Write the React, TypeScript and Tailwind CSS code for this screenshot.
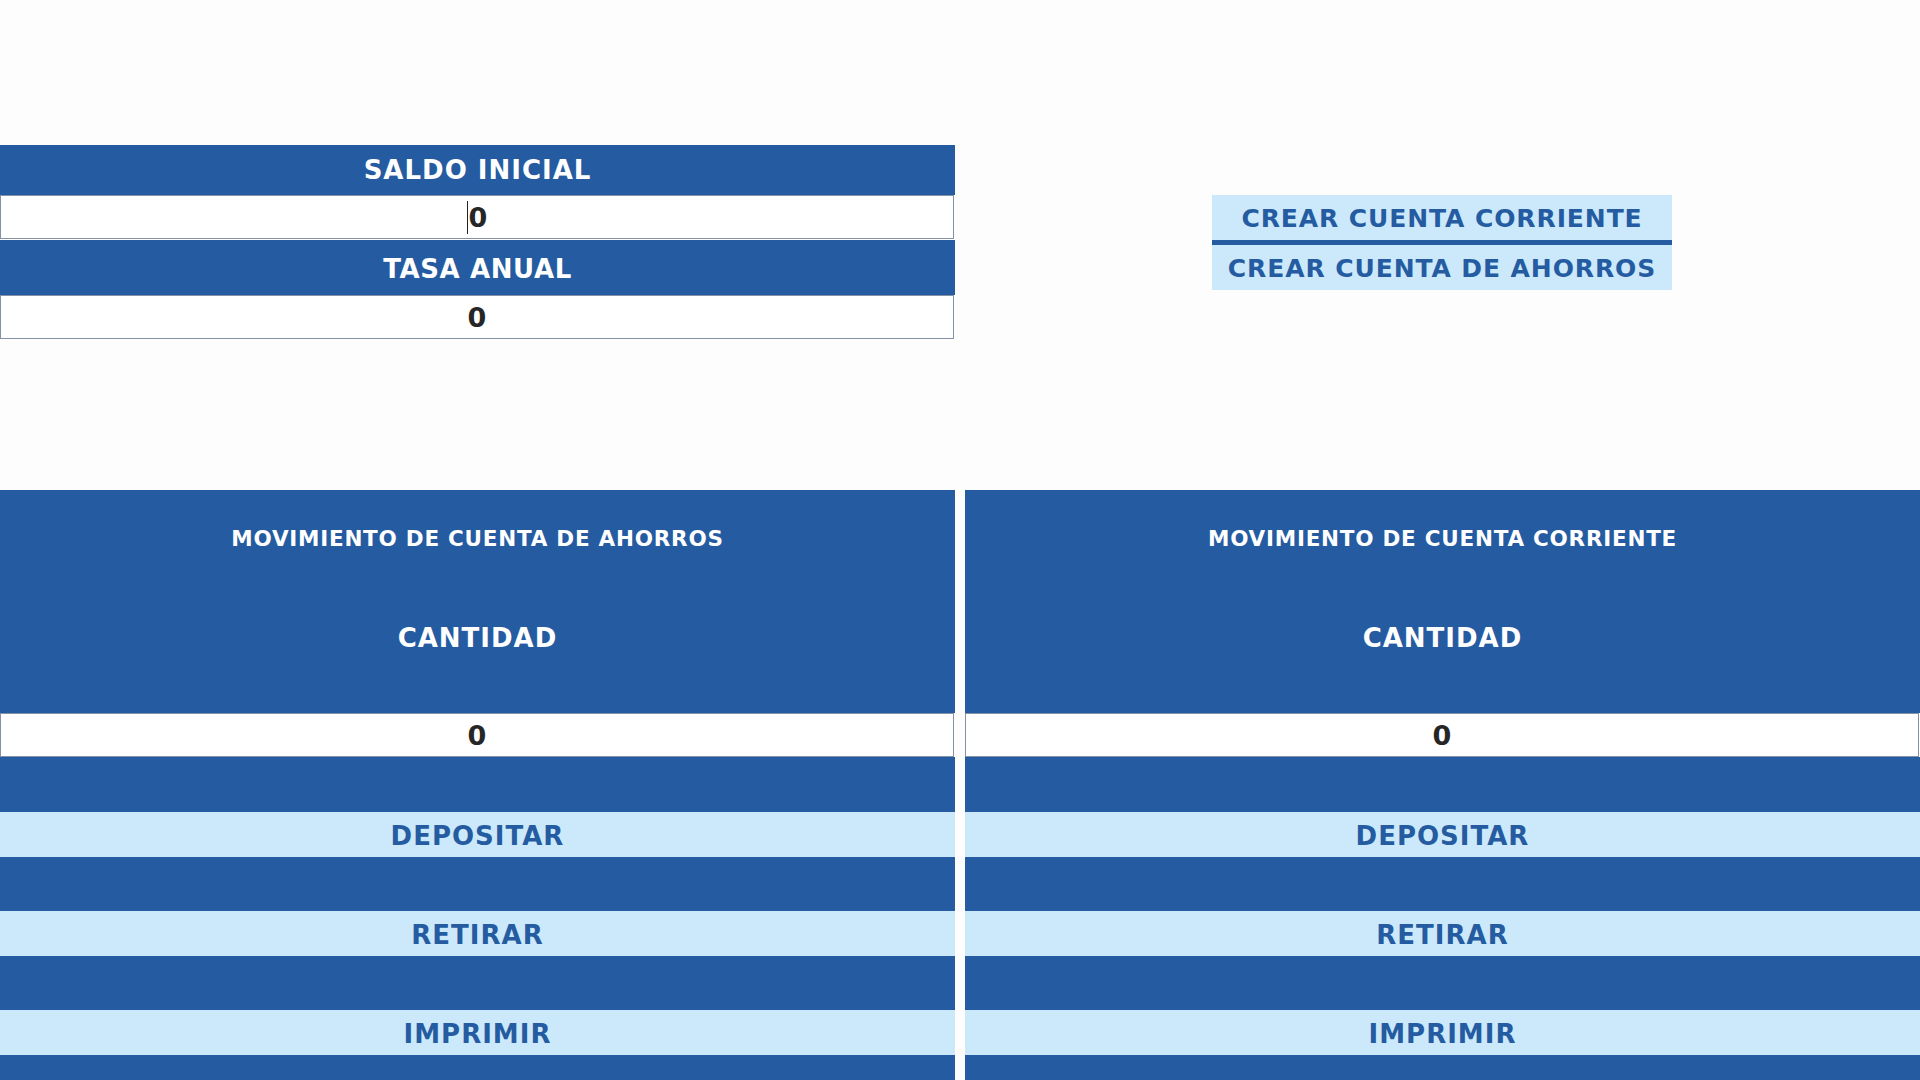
const blue = 'bg-[#245ba1]';

function ValueBox({ value, caret }: { value: string; caret?: boolean }) {
  return (
    <div className="h-[44px] w-[954px] max-w-[calc(100%-1px)] bg-white border border-[#8592a5] flex items-center justify-center pt-px">
      {caret && <span className="w-px h-[33px] bg-[#222] mr-px" />}
      <span className="text-[27px] leading-none text-[#262626]">{value}</span>
    </div>
  );
}

function LightButton({ label }: { label: string }) {
  return (
    <button className="h-[45px] w-full pt-[3px] bg-[#cce9fb] text-[#255ca1] text-[26px] tracking-[1px] flex items-center justify-center">
      {label}
    </button>
  );
}

function Movimiento({ title }: { title: string }) {
  return (
    <div className="w-[955px] flex flex-col">
      <div className={`${blue} h-[223px] text-white text-center`}>
        <p className="pt-[37px] text-[21.5px] leading-[24px] tracking-[0.75px]">{title}</p>
        <p className="mt-[72px] text-[26px] leading-[30px] tracking-[1px]">CANTIDAD</p>
      </div>
      <ValueBox value="0" />
      <div className={`${blue} h-[55px]`} />
      <LightButton label="DEPOSITAR" />
      <div className={`${blue} h-[54px]`} />
      <LightButton label="RETIRAR" />
      <div className={`${blue} h-[54px]`} />
      <LightButton label="IMPRIMIR" />
      <div className={`${blue} h-[25px]`} />
    </div>
  );
}

export default function App() {
  return (
    <div className="w-[1920px] h-[1080px] overflow-hidden bg-[#fdfdfd] font-['DejaVu_Sans',sans-serif] font-bold">
      <div className="flex pt-[145px]">
        <div className="w-[955px]">
          <div className={`${blue} h-[50px] flex items-center justify-center text-white text-[26px] tracking-[1px]`}>
            SALDO INICIAL
          </div>
          <ValueBox value="0" caret />
          <div className={`${blue} h-[55px] mt-px pt-[3px] flex items-center justify-center text-white text-[26px] tracking-[0.6px]`}>
            TASA ANUAL
          </div>
          <ValueBox value="0" />
        </div>
        <div className="flex-1 flex justify-center pl-[9px] pt-[50px]">
          <div className="w-[460px] flex flex-col">
            <button className="h-[45px] pt-[3px] bg-[#cce9fb] text-[#255ca1] text-[25px] tracking-[0.9px] flex items-center justify-center">
              CREAR CUENTA CORRIENTE
            </button>
            <div className={`${blue} h-[5px]`} />
            <button className="h-[45px] pt-[2px] bg-[#cce9fb] text-[#255ca1] text-[25px] tracking-[0.9px] flex items-center justify-center">
              CREAR CUENTA DE AHORROS
            </button>
          </div>
        </div>
      </div>
      <div className="flex gap-[10px] mt-[151px]">
        <Movimiento title="MOVIMIENTO DE CUENTA DE AHORROS" />
        <Movimiento title="MOVIMIENTO DE CUENTA CORRIENTE" />
      </div>
    </div>
  );
}
